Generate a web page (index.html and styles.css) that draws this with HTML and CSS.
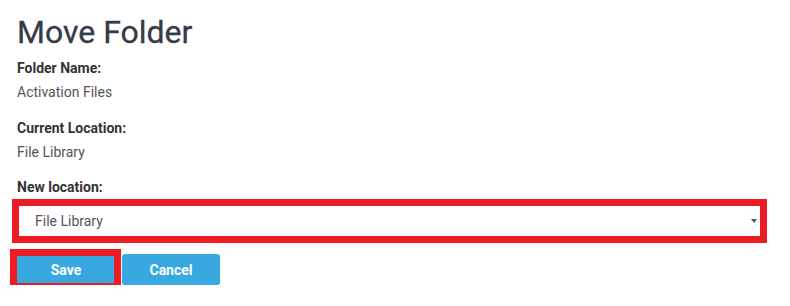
FILE: index.html
```html
<!DOCTYPE html>
<html>
<head>
<meta charset="utf-8">
<link rel="stylesheet" href="styles.css">
</head>
<body>
<div class="page">
  <h1 class="title">Move Folder</h1>
  <div class="field">
    <div class="label">Folder Name:</div>
    <div class="value">Activation Files</div>
  </div>
  <div class="field">
    <div class="label">Current Location:</div>
    <div class="value">File Library</div>
  </div>
  <div class="label">New location:</div>
  <div class="select-wrap">
    <div class="select" role="combobox">File Library</div>
    <svg class="caret" width="6" height="4" viewBox="0 0 6 4"><path d="M0 0H6L3 4Z" fill="#555"/></svg>
    <span class="highlight"></span>
  </div>
  <div class="actions">
    <span class="btn-wrap">
      <button class="btn btn-save">Save</button>
      <span class="highlight highlight-btn"></span>
    </span>
    <button class="btn btn-cancel">Cancel</button>
  </div>
</div>
</body>
</html>
```

FILE: styles.css
```css
html, body {
  margin: 0;
  padding: 0;
  background: #fff;
}
.page {
  font-family: Roboto, "Liberation Sans", sans-serif;
  padding: 14px 16px 0 16px;
  width: 748px;
}
.title {
  margin: 0 0 8px 0;
  padding-left: 1px;
  font-size: 32px;
  line-height: 36px;
  font-weight: 400;
  color: #343b47;
  -webkit-text-stroke: 0.3px #343b47;
}
.field {
  margin-bottom: 16px;
}
.label {
  padding-left: 1px;
  font-size: 14px;
  line-height: 20px;
  font-weight: 700;
  color: #333;
}
.field .label {
  margin-bottom: 4px;
}
.value {
  padding-left: 1px;
  font-size: 14px;
  line-height: 20px;
  color: #555;
}
.field + .label {
  margin-top: -1px;
}
.select-wrap {
  position: relative;
  margin-top: 5px;
  height: 38px;
}
.select {
  display: flex;
  align-items: center;
  width: 748px;
  height: 38px;
  box-sizing: border-box;
  border: 1px solid #d5d9de;
  border-radius: 2px;
  background: #fff;
  box-shadow: 0 1px 3px rgba(60, 90, 130, 0.15);
  padding: 0 0 0 18px;
  font-size: 14px;
  color: #555;
}
.caret {
  position: absolute;
  right: 7px;
  top: 17px;
}
.highlight {
  position: absolute;
  top: -3px;
  left: -4px;
  right: -3px;
  bottom: -3px;
  border: 7px solid #ed1c24;
  pointer-events: none;
}
.actions {
  display: flex;
  margin-top: 14px;
}
.btn-wrap {
  position: relative;
  display: flex;
  margin-left: 1px;
}
.btn {
  width: 98px;
  height: 31px;
  border: none;
  border-radius: 3px;
  background: #37a9e0;
  color: #fff;
  font-family: Roboto, "Liberation Sans", sans-serif;
  font-size: 14px;
  font-weight: 700;
  padding: 0;
}
.btn-cancel {
  margin-left: 7px;
}
.highlight-btn {
  top: -5px;
  bottom: -5px;
  left: -7px;
  right: -6px;
}
```
